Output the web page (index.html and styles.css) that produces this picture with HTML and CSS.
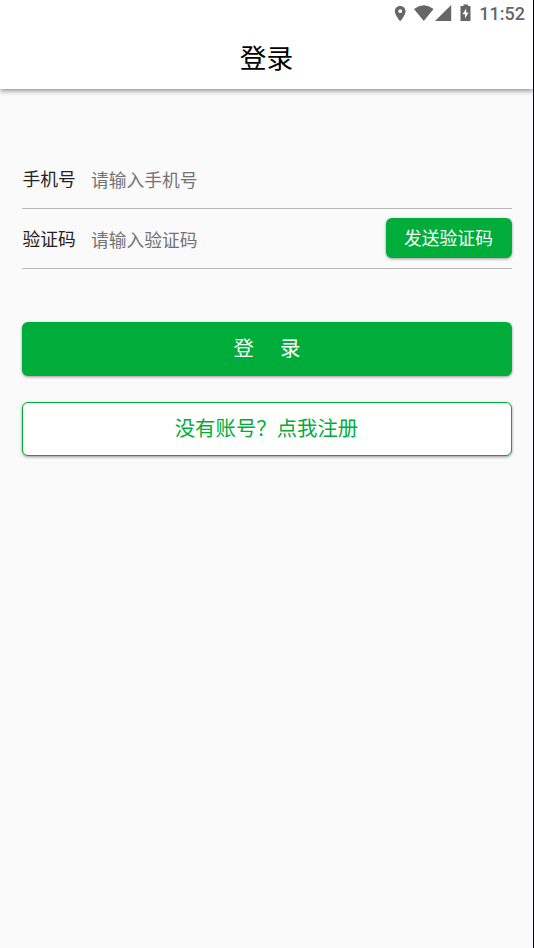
FILE: index.html
```html
<!DOCTYPE html>
<html lang="zh-CN">
<head>
<meta charset="utf-8">
<title>登录</title>
<link rel="stylesheet" href="styles.css">
</head>
<body>
<div class="screen">
  <header class="appbar">
    <div class="status">
      <svg class="status-icons" width="74" height="26" viewBox="0 0 74 26" fill="#666">
        <path fill-rule="evenodd" d="M6.200 6C3 6 .8 8.300.8 11.200C.8 15 6.200 21.300 6.200 21.300S11.600 15 11.600 11.200C11.600 8.300 9.300 6 6.200 6ZM6.200 9.300a1.900 1.900 0 1 1 0 3.800a1.900 1.900 0 0 1 0-3.800Z"/>
        <path d="M20 9Q29.800 1.600 39.600 9L29.800 21Z"/>
        <path d="M57.200 5V21H41Z"/>
        <path fill-rule="evenodd" d="M69.500 4.500h4.500v1.500h2.500v15h-10V6h3ZM72.200 8.500L68.500 14.200H71V18.500L74.500 12.500H72.200Z"/>
      </svg>
      <span class="clock">11:52</span>
    </div>
    <h1 class="title">登录</h1>
  </header>
  <main class="form">
    <div class="field">
      <label class="label" for="phone">手机号</label>
      <input class="input" id="phone" type="text" placeholder="请输入手机号">
    </div>
    <div class="field">
      <label class="label" for="code">验证码</label>
      <input class="input" id="code" type="text" placeholder="请输入验证码">
      <button class="button send">发送验证码</button>
    </div>
    <button class="button login"><span>登</span><span>录</span></button>
    <button class="button register">没有账号？点我注册</button>
  </main>
</div>
</body>
</html>
```
FILE: styles.css
```css
* { box-sizing: border-box; }

body {
  margin: 0;
  background: #fafafa;
  font-family: Roboto, "Noto Sans CJK SC", sans-serif;
}

.screen {
  height: 948px;
  border-right: 1px solid #050510;
  overflow: hidden;
}

.appbar {
  height: 89px;
  background: #fff;
  box-shadow: 0 2px 5px rgba(0, 0, 0, .42);
}

.status {
  height: 27px;
  padding-right: 8px;
  display: flex;
  justify-content: flex-end;
}

.status-icons {
  margin-right: 11px;
  overflow: visible;
}

.clock {
  font-size: 18px;
  font-weight: 500;
  line-height: 28px;
  color: #666;
}

.title {
  margin: 0;
  font-size: 26.67px;
  line-height: 65px;
  font-weight: 400;
  text-align: center;
  color: #000;
}

.form {
  display: flex;
  flex-direction: column;
  padding: 60px 21px 0 22px;
}

.field {
  display: flex;
  align-items: center;
  height: 60px;
  border-bottom: 1px solid #b7b7b7;
  font-size: 17.78px;
}

.label {
  width: 69px;
  padding: 0 0 2px .5px;
  color: #222;
}

.input {
  flex: 1;
  min-width: 0;
  padding: 4px 0 0;
  border: 0;
  outline: 0;
  background: transparent;
  font: inherit;
}

.input::placeholder { color: #737373; }

.button {
  padding: 0 0 4px;
  border: 0;
  border-radius: 6px;
  background: #00ad3a;
  color: #fff;
  font-family: inherit;
  box-shadow: 0 1px 3px rgba(0, 0, 0, .4);
}

.send {
  width: 126px;
  height: 40px;
  margin-bottom: 1px;
  padding: 0 1px 2px 0;
  font-size: 17.78px;
}

.login,
.register {
  height: 54px;
  font-size: 20.4px;
}

.login {
  display: flex;
  align-items: center;
  justify-content: center;
  gap: 26px;
  margin-top: 53px;
}

.register {
  margin-top: 26px;
  padding-right: 1px;
  border: 1px solid #00ad3a;
  background: #fff;
  color: #00ad3a;
}
```
